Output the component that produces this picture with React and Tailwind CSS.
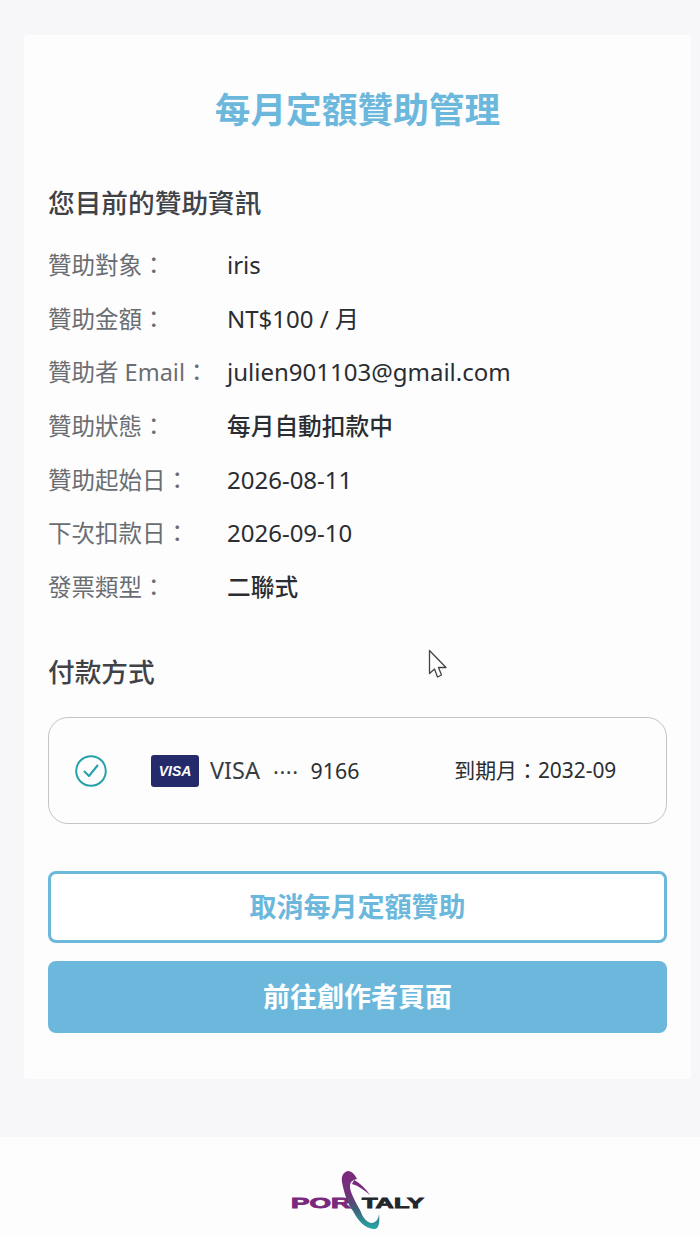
import React from "react";

const font = { fontFamily: '"Noto Sans", "Noto Sans CJK TC", sans-serif' };

const rows = [
  ["贊助對象：", "iris", false],
  ["贊助金額：", "NT$100 / 月", false],
  ["贊助者 Email：", "julien901103@gmail.com", false],
  ["贊助狀態：", "每月自動扣款中", true],
  ["贊助起始日：", "2026-08-11", false],
  ["下次扣款日：", "2026-09-10", false],
  ["發票類型：", "二聯式", true],
];

function Logo() {
  return (
    <svg width="140" height="66" viewBox="0 0 140 66" className="block ml-[16px]">
      <defs>
        <linearGradient id="sw" x1="0" y1="0" x2="0" y2="1">
          <stop offset="0" stopColor="#7a2a7c" />
          <stop offset="0.4" stopColor="#72307a" />
          <stop offset="0.65" stopColor="#3f5f74" />
          <stop offset="1" stopColor="#25a9a8" />
        </linearGradient>
      </defs>
      <text x="3" y="40" textLength="60" lengthAdjust="spacingAndGlyphs" fontFamily="Liberation Sans, sans-serif" fontWeight="700" fontSize="14" fill="#7a2a7c" stroke="#7a2a7c" strokeWidth="0.8">POR</text>
      <text x="74" y="40" textLength="62" lengthAdjust="spacingAndGlyphs" fontFamily="Liberation Sans, sans-serif" fontWeight="700" fontSize="14" fill="#23262c" stroke="#23262c" strokeWidth="0.8">TALY</text>
      <path d="M60 3 C55 4 53 9 54 14 C56 25 60 37 65 43 C70 53 77 60 85 61 C91 62 92 55 91 45 C91 50 89 54 84 55 C79 55 75 50 72 42 C68 35 62 24 62 19 C62 14 64 12 69 11 C67 7 64 3 60 3Z" fill="url(#sw)" />
      <path d="M66 12 C72 15 78 21 82 27 C76 22 71 18 64 16Z" fill="#7a2a7c" />
    </svg>
  );
}

export default function App() {
  return (
    <div style={font} className="relative min-h-[1236px] bg-[#f7f7f9] flex flex-col">
      <main className="pt-[35px] pl-6 pr-[9px]">
        <section className="bg-[#fdfdfe] rounded-[4px] h-[1044px] px-6 pt-[48px]">
          <h1 className="text-center text-[35.7px] leading-[52px] font-bold text-[#6cb8dd]">每月定額贊助管理</h1>
          <h2 className="mt-[49px] text-[26.7px] leading-[38px] font-medium text-[#3f4347]">您目前的贊助資訊</h2>
          <dl className="mt-[24px] flex flex-col gap-[15.7px]">
            {rows.map(([k, v, strong]) => (
              <div key={k} className="flex items-center h-[38px]">
                <dt className="w-[179px] shrink-0 text-[23.5px] leading-[38px] text-[#6a6e72] whitespace-nowrap">{k}</dt>
                <dd className={strong ? "text-[23.7px] leading-[38px] font-medium text-[#2a2d31] whitespace-nowrap" : "text-[24px] leading-[38px] text-[#2a2d31] whitespace-nowrap"}>{v}</dd>
              </div>
            ))}
          </dl>
          <h2 className="mt-[47px] text-[26.7px] leading-[38px] font-medium text-[#3f4347]">付款方式</h2>
          <div className="mt-[26px] h-[107px] rounded-[20px] border border-[#c4c4c6] flex items-center pl-[26px]">
            <svg width="32" height="32" viewBox="0 0 32 32" fill="none" className="shrink-0">
              <circle cx="16" cy="16" r="14.8" stroke="#23a0a8" strokeWidth="2" />
              <path d="M9.5 16.5 L14 21 L22.5 10.5" stroke="#23a0a8" strokeWidth="2" strokeLinecap="round" strokeLinejoin="round" />
            </svg>
            <div className="ml-[44px] w-[48px] h-[32px] rounded-[3px] bg-[#252a6b] flex items-center justify-center shrink-0">
              <span className="text-white text-[14px] font-bold italic leading-none" style={{ fontFamily: '"Liberation Sans", sans-serif' }}>VISA</span>
            </div>
            <span className="ml-[11px] text-[23.5px] text-[#3a3d42] leading-none">VISA</span>
            <span className="ml-[13px] text-[22px] text-[#3a3d42] leading-none tracking-[0.5px]">····</span>
            <span className="ml-[12px] text-[21.3px] text-[#2a2d31] leading-none">9166</span>
            <span className="ml-[95px] text-[20.9px] text-[#2a2d31] leading-none whitespace-nowrap">到期月：2032-09</span>
          </div>
          <button className="mt-[47px] w-full h-[72px] rounded-[8px] border-[3px] border-[#6cb8dd] bg-white text-[#6cb8dd] text-[27px] font-bold flex items-center justify-center">取消每月定額贊助</button>
          <button className="mt-[18px] w-full h-[72px] rounded-[8px] bg-[#6cb8dd] text-white text-[27px] font-bold flex items-center justify-center">前往創作者頁面</button>
        </section>
      </main>
      <footer className="mt-[58px] flex-1 bg-[#fdfdfe] flex justify-center items-start pt-[31px]">
        <Logo />
      </footer>
      <svg width="20" height="30" viewBox="0 0 20 30" className="absolute left-[428px] top-[649px]">
        <path d="M1.5 1.5 L18 18.5 L10.5 18.5 L13.5 26 L9.5 28 L6.5 20 L1.5 24.5 Z" fill="#fff" stroke="#444" strokeWidth="1.3" strokeLinejoin="round" />
      </svg>
    </div>
  );
}
